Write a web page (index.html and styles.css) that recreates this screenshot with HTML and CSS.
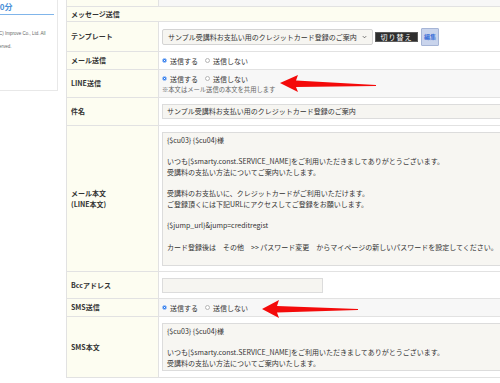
FILE: index.html
```html
<!DOCTYPE html>
<html lang="ja">
<head>
<meta charset="utf-8">
<title>メッセージ送信</title>
<link rel="stylesheet" href="styles.css">
</head>
<body>
<div class="page">
  <aside class="side">
    <div class="side-title">30分</div>
    <p class="copy">Copyright (C) Improve Co., Ltd. All<br>Rights Reserved.</p>
  </aside>
  <main class="main">
    <div class="form">
      <div class="lab"></div>
      <div class="val alt"></div>

      <div class="sec">メッセージ送信</div>

      <div class="lab">テンプレート</div>
      <div class="val tpl">
        <div class="select">
          <span>サンプル受講料お支払い用のクレジットカード登録のご案内</span>
          <svg class="chev" viewBox="0 0 6 4"><polyline points="1,1 3,3 5,1"/></svg>
        </div>
        <button class="btn-dark" type="button">切り替え</button>
        <button class="btn-edit" type="button">編集</button>
      </div>

      <div class="lab">メール送信</div>
      <div class="val">
        <div class="radios">
          <label class="radio"><span class="dot on"></span>送信する</label>
          <label class="radio"><span class="dot"></span>送信しない</label>
        </div>
      </div>

      <div class="lab">LINE送信</div>
      <div class="val alt">
        <div class="radios">
          <label class="radio"><span class="dot on"></span>送信する</label>
          <label class="radio"><span class="dot"></span>送信しない</label>
        </div>
        <div class="note">※本文はメール送信の本文を共用します</div>
      </div>

      <div class="lab">件名</div>
      <div class="val">
        <div class="input wide">サンプル受講料お支払い用のクレジットカード登録のご案内</div>
      </div>

      <div class="lab">メール本文<br>(LINE本文)</div>
      <div class="val">
        <div class="textarea body-text">{$cu03} {$cu04}様

いつも[$smarty.const.SERVICE_NAME]をご利用いただきましてありがとうございます。
受講料の支払い方法についてご案内いたします。

受講料のお支払いに、クレジットカードがご利用いただけます。
ご登録頂くには下記URLにアクセスしてご登録をお願いします。

{$jump_url}&amp;jump=creditregist

カード登録後は　その他　&gt;&gt; パスワード変更　からマイページの新しいパスワードを設定してください。</div>
      </div>

      <div class="lab">Bccアドレス</div>
      <div class="val">
        <div class="input bcc"></div>
      </div>

      <div class="lab">SMS送信</div>
      <div class="val alt">
        <div class="radios">
          <label class="radio"><span class="dot on"></span>送信する</label>
          <label class="radio"><span class="dot"></span>送信しない</label>
        </div>
      </div>

      <div class="lab">SMS本文</div>
      <div class="val">
        <div class="textarea sms-text">{$cu03} {$cu04}様

いつも[$smarty.const.SERVICE_NAME]をご利用いただきましてありがとうございます。
受講料の支払い方法についてご案内いたします。

受講料のお支払いに、クレジットカードがご利用いただけます。</div>
      </div>
    </div>

    <svg class="arrow arrow-line" viewBox="0 0 96 18"><polygon points="0,8 18,0 16,5.5 96,10 96,11 16,12 18,17"/></svg>
    <svg class="arrow arrow-sms" viewBox="0 0 96 18"><polygon points="0,9 17,0 15,6 96,9 96,10 15,12.5 17,18"/></svg>
  </main>
</div>
</body>
</html>
```

FILE: styles.css
```css
* {
  box-sizing: border-box;
}

html,
body {
  margin: 0;
  padding: 0;
}

body {
  width: 500px;
  height: 383px;
  overflow: hidden;
  background: #ffffff;
  color: #333333;
  font-family: "Noto Sans CJK JP", "Noto Sans", sans-serif;
}

.page {
  display: flex;
  align-items: flex-start;
  gap: 8px;
}

/* sidebar */
.side {
  flex: none;
  width: 58px;
  height: 91px;
  padding-right: 3px;
  border-right: 1px solid #e8e8e8;
  border-bottom: 1px solid #e8e8e8;
  overflow: hidden;
}

.side-title {
  margin: 2px 0 0 -5px;
  padding-bottom: 2px;
  font-size: 8px;
  line-height: 10px;
  font-weight: bold;
  color: #4a90d9;
  border-bottom: 1.5px solid #80b5ea;
}

.copy {
  margin: 12px 0 0 -23px;
  font-family: "Liberation Sans", sans-serif;
  font-size: 4.5px;
  line-height: 13px;
  white-space: nowrap;
  color: #666666;
}

/* main form */
.main {
  position: relative;
  flex: none;
  width: 600px;
}

.form {
  display: grid;
  grid-template-columns: 91px 1fr;
  grid-template-rows: 6px 14px 29px 17px 27px 27px 145px 26px 17px 60px;
  gap: 1px;
  padding: 0 0 1px 1px;
  background: #e2e2e2;
  font-size: 7px;
}

.lab {
  display: flex;
  align-items: center;
  padding: 0 4px;
  background: #fdfdf1;
  font-weight: bold;
  line-height: 10.5px;
  color: #333333;
}

.sec {
  grid-column: 1 / -1;
  display: flex;
  align-items: center;
  padding: 0 4px;
  background: #fdfdf1;
  font-weight: bold;
  line-height: 10px;
}

.val {
  display: flex;
  flex-direction: column;
  justify-content: center;
  padding: 0 3px;
  background: #ffffff;
  line-height: 10px;
}

.val.alt {
  background: #f7f7f7;
}

.val.tpl {
  flex-direction: row;
  align-items: center;
  justify-content: flex-start;
}

/* template select + buttons */
.select {
  display: flex;
  align-items: center;
  justify-content: space-between;
  width: 211px;
  height: 16px;
  padding: 0 5px;
  background: #f6f5f1;
  border: 1px solid #d4d4d4;
  border-radius: 2px;
  color: #333333;
}

.chev {
  width: 5px;
  height: 4px;
  fill: none;
  stroke: #555555;
  stroke-width: 1;
}

.btn-dark {
  height: 10px;
  width: 43px;
  margin-left: 2px;
  padding: 0;
  border: 1px solid #5a5a5a;
  background: #2e2e2e;
  color: #ffffff;
  font-family: inherit;
  font-size: 7px;
  line-height: 8px;
  letter-spacing: 1px;
}

.btn-edit {
  width: 18px;
  height: 18px;
  margin-left: 3px;
  padding: 0;
  border: 1px solid #a6b5d6;
  border-radius: 1px;
  background: #c9d4ec;
  color: #3a6fd8;
  font-family: inherit;
  font-size: 6px;
  font-weight: bold;
  line-height: 8px;
}

/* radios */
.radios {
  display: flex;
  align-items: center;
  gap: 7px;
}

.radio {
  display: flex;
  align-items: center;
  gap: 3px;
}

.dot {
  width: 5px;
  height: 5px;
  border-radius: 50%;
  border: 1px solid #b5b5b5;
  background: #ffffff;
}

.dot.on {
  border-color: #8db6f3;
  background: radial-gradient(circle, #ffffff 0 0.6px, #2f7cf0 1px);
}

.note {
  margin-top: 1px;
  font-size: 6.3px;
  line-height: 9px;
  color: #666666;
}

/* inputs */
.input {
  height: 15px;
  padding: 0 4px;
  background: #f6f5f1;
  border: 1px solid #dcdcdc;
  line-height: 13px;
}

.input.wide {
  width: 440px;
}

.input.bcc {
  width: 161px;
}

.textarea {
  width: 440px;
  padding: 2px 4px;
  background: #f7f6f2;
  border: 1px solid #dcdcdc;
  line-height: 10.7px;
  white-space: pre-wrap;
  overflow: hidden;
}

.body-text {
  height: 134px;
}

.sms-text {
  height: 48px;
}

/* red annotation arrows */
.arrow {
  position: absolute;
  width: 96px;
  height: 18px;
  fill: #f40a0a;
}

.arrow-line {
  left: 214px;
  top: 75px;
}

.arrow-sms {
  left: 196px;
  top: 300px;
}
```
